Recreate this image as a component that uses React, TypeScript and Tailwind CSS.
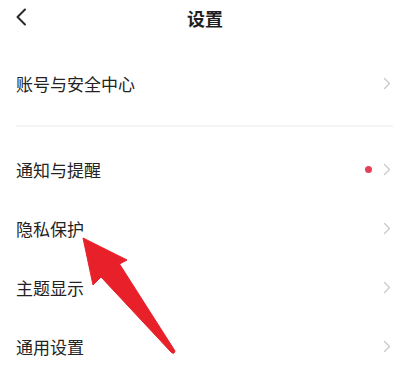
import React from 'react';

const items = [
  { label: '通知与提醒', dot: true },
  { label: '隐私保护' },
  { label: '主题显示' },
  { label: '通用设置' },
];

function Chevron() {
  return (
    <svg width="8" height="13" viewBox="0 0 8 13" className="shrink-0">
      <polyline points="1.5,1.5 6.5,6.5 1.5,11.5" fill="none" stroke="#c9c9c9" strokeWidth="1.3" strokeLinecap="round" strokeLinejoin="round" />
    </svg>
  );
}

function Row({ label, dot, h = 'h-[59px]' }: { label: string; dot?: boolean; h?: string }) {
  return (
    <div className={`flex items-center justify-between pl-4 pr-[9px] ${h}`}>
      <span className="text-[17px] leading-none text-[#232323]">{label}</span>
      <div className="flex items-center gap-[11px]">
        {dot && <span className="w-[7px] h-[7px] rounded-full bg-[#e5405a]" />}
        <Chevron />
      </div>
    </div>
  );
}

export default function App() {
  return (
    <div
      className="relative w-[400px] h-[366px] overflow-hidden bg-white"
      style={{ fontFamily: '"Noto Sans CJK SC", "Noto Sans", sans-serif' }}
    >
      {/* header */}
      <div className="relative flex items-center justify-center h-[36px]">
        <svg width="12" height="18" viewBox="0 0 12 18" className="absolute left-[15px] top-[8px]">
          <polyline points="10,1.5 2.5,9 10,16.5" fill="none" stroke="#2a2a2a" strokeWidth="2" strokeLinecap="round" strokeLinejoin="round" />
        </svg>
        <span className="pl-[10px] text-[18px] font-bold leading-none text-[#1e1e1e]">设置</span>
      </div>

      <div className="mt-[18px]">
        <Row label="账号与安全中心" h="h-[58px]" />
      </div>

      <div className="mt-[13px] ml-[16px] mr-[7px] h-[2px] bg-[#f4f4f4]" />

      <div className="mt-[13px]">
        {items.map((it) => (
          <Row key={it.label} label={it.label} dot={it.dot} />
        ))}
      </div>

      {/* red annotation arrow */}
      <svg width="400" height="366" viewBox="0 0 400 366" className="absolute inset-0 pointer-events-none">
        <path
          d="M83,238 L127,260 L119.5,264 L175,351 Q174,355 171,352 L101,277 L93,285 Z"
          fill="#e8202a"
          stroke="#e8202a"
          strokeWidth="1"
          strokeLinejoin="round"
        />
      </svg>
    </div>
  );
}
